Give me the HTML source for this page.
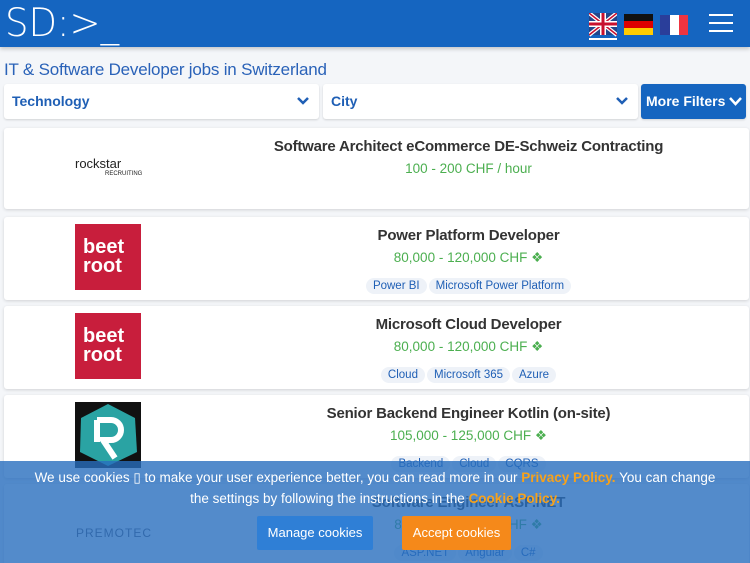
<!DOCTYPE html>
<html><head><meta charset="utf-8"><style>
*{box-sizing:border-box;margin:0;padding:0}
html,body{width:750px;height:563px;overflow:hidden}
body{background:#f4f6f9;font-family:"Liberation Sans",sans-serif;position:relative}
.hdr{height:47px;background:#1565c0;position:relative;box-shadow:0 2px 4px rgba(0,0,0,.2)}
.logo{position:absolute;left:5px;top:1px;color:#fff;font-size:39px;font-family:"DejaVu Sans",sans-serif;font-weight:200;letter-spacing:0px;transform:scaleX(.95);transform-origin:left}
h1{font-weight:normal;font-size:17px;color:#2a62b8;position:absolute;left:4px;top:60px;letter-spacing:-.2px}
.sel{position:absolute;top:84px;height:35px;background:#fff;border-radius:3px;box-shadow:0 1px 2px rgba(0,0,0,.15);color:#1f5fb5;font-weight:bold;font-size:14px;padding:9px 8px}
.ar{position:absolute;right:10px;top:13px}
.card{position:absolute;left:4px;width:745px;background:#fff;border-radius:3px;box-shadow:0 1px 3px rgba(0,0,0,.15)}
.t{position:absolute;left:168px;width:593px;text-align:center;font-size:15px;font-weight:bold;color:#333;top:10px;letter-spacing:-.2px}
.s{position:absolute;left:168px;width:593px;text-align:center;font-size:13.5px;color:#4caf50;top:33px}
.tags{position:absolute;left:168px;width:593px;text-align:center;top:59px}
.tags span{display:inline-block;background:#eef2f8;color:#1f5fb5;font-size:11.5px;padding:2px 7px;border-radius:9px;margin:0 1px}
.lg{position:absolute;left:71px;width:66px;height:66px;top:7px}
.ck{position:absolute;left:0;top:461px;width:750px;height:102px;background:rgba(40,110,190,.8);color:#fff;text-align:center;font-size:13.5px;line-height:21px;padding-top:6px}
.ck b{color:#f7a21b;font-weight:bold}
.btn{position:absolute;top:55px;height:34px;color:#fff;font-size:13px;line-height:34px;border-radius:2px}
</style></head><body>
<div class="hdr"><div class="logo">SD:&gt;_</div>
<svg style="position:absolute;left:589px;top:13px" width="28" height="27"><rect width="28" height="22" fill="#21468b"/><path d="M0 0L28 22M28 0L0 22" stroke="#fff" stroke-width="4"/><path d="M0 0L28 22M28 0L0 22" stroke="#c8102e" stroke-width="1.5"/><path d="M14 0V22M0 11H28" stroke="#fff" stroke-width="6"/><path d="M14 0V22M0 11H28" stroke="#c8102e" stroke-width="3"/><rect y="25" width="28" height="2" fill="#fff"/></svg>
<svg style="position:absolute;left:624px;top:14px" width="29" height="21"><rect width="29" height="7" fill="#111"/><rect y="7" width="29" height="7" fill="#d00"/><rect y="14" width="29" height="7" fill="#fc0"/></svg>
<svg style="position:absolute;left:660px;top:15px" width="28" height="20"><rect width="10" height="20" fill="#2a3e9a"/><rect x="10" width="9" height="20" fill="#fff"/><rect x="19" width="9" height="20" fill="#ee3440"/></svg>
<svg style="position:absolute;left:709px;top:13px" width="24" height="20"><path d="M0 2H24M0 10H24M0 18H24" stroke="#fff" stroke-width="2"/></svg>
</div>
<h1>IT &amp; Software Developer jobs in Switzerland</h1>
<div class="sel" style="left:4px;width:315px">Technology<svg class="ar" width="12" height="8"><path d="M1 1l5 5 5-5" stroke="#1f5fb5" stroke-width="2.5" fill="none"/></svg></div>
<div class="sel" style="left:323px;width:315px">City<svg class="ar" width="12" height="8"><path d="M1 1l5 5 5-5" stroke="#1f5fb5" stroke-width="2.5" fill="none"/></svg></div>
<div class="sel" style="left:641px;width:105px;background:#1565c0;color:#fff;padding:9px 5px">More Filters<svg class="ar" style="right:4px" width="13" height="9"><path d="M1 1l5.5 6 5.5-6" stroke="#fff" stroke-width="2.5" fill="none"/></svg></div>

<div class="card" style="top:128px;height:81px"><div style="position:absolute;left:71px;top:28px;font-size:13px;color:#222">rockstar<div style="font-size:6px;margin-left:30px">RECRUITING</div></div>
<div class="t">Software Architect eCommerce DE-Schweiz Contracting</div><div class="s">100 - 200 CHF / hour</div></div>

<div class="card" style="top:217px;height:83px"><div class="lg" style="background:#c81e3c;color:#fff;font-weight:bold;font-size:20px;line-height:19px;padding:14px 8px">beet<br>root</div>
<div class="t">Power Platform Developer</div><div class="s">80,000 - 120,000 CHF ❖</div><div class="tags"><span>Power BI</span><span>Microsoft Power Platform</span></div></div>

<div class="card" style="top:306px;height:83px"><div class="lg" style="background:#c81e3c;color:#fff;font-weight:bold;font-size:20px;line-height:19px;padding:14px 8px">beet<br>root</div>
<div class="t">Microsoft Cloud Developer</div><div class="s">80,000 - 120,000 CHF ❖</div><div class="tags"><span>Cloud</span><span>Microsoft 365</span><span>Azure</span></div></div>

<div class="card" style="top:395px;height:83px"><svg class="lg" viewBox="0 0 66 66"><rect width="66" height="66" fill="#111"/><polygon points="33,2 60,16 62,50 33,64 5,50 6,16" fill="#2aa3a3"/><path d="M22 18h14a10 10 0 0 1 0 20h-8l12 18" stroke="#fff" stroke-width="6" fill="none"/><path d="M22 18v22" stroke="#fff" stroke-width="6"/></svg>
<div class="t">Senior Backend Engineer Kotlin (on-site)</div><div class="s">105,000 - 125,000 CHF ❖</div><div class="tags"><span>Backend</span><span>Cloud</span><span>CQRS</span></div></div>

<div class="card" style="top:484px;height:83px"><div style="position:absolute;left:72px;top:42px;color:#556;font-size:12px;letter-spacing:1px">PREMOTEC</div>
<div class="t">Software Engineer ASP.NET</div><div class="s">80,000 - 115,000 CHF ❖</div><div class="tags"><span>ASP.NET</span><span>Angular</span><span>C#</span></div></div>

<div class="ck">We use cookies ▯ to make your user experience better, you can read more in our <b>Privacy Policy.</b> You can change<br>the settings by following the instructions in the <b>Cookie Policy.</b>
<div class="btn" style="left:257px;width:116px;background:#2f7fd6">Manage cookies</div>
<div class="btn" style="left:402px;width:109px;background:#f5891a">Accept cookies</div></div>
</body></html>
